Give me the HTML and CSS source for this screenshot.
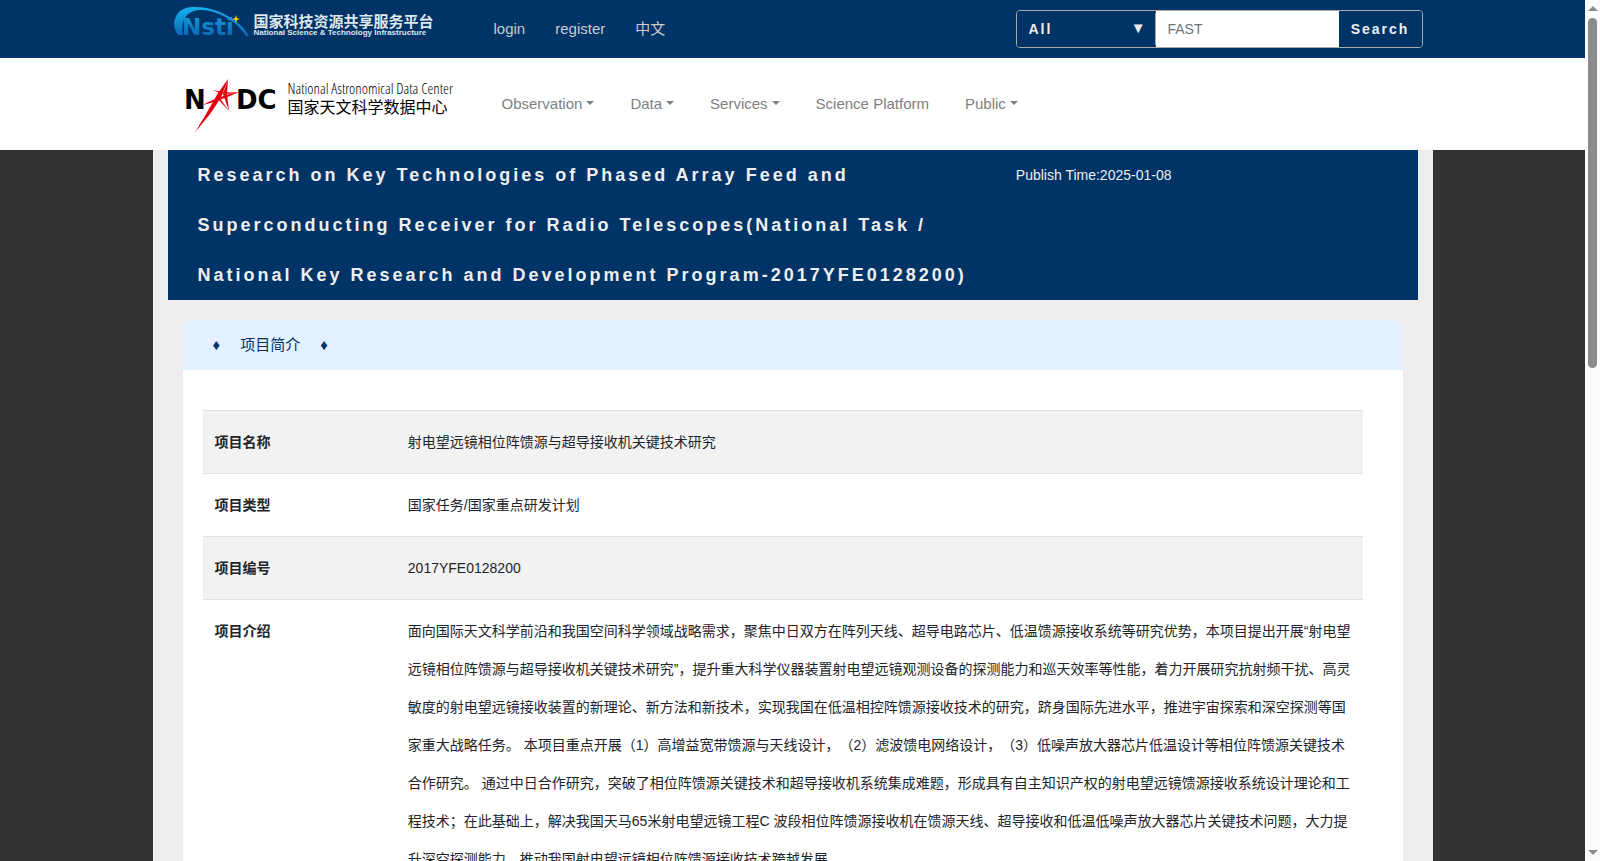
FILE: index.html
```html
<!DOCTYPE html>
<html lang="zh-CN">
<head>
<meta charset="utf-8">
<title>National Astronomical Data Center</title>
<link rel="stylesheet" href="styles.css">
</head>
<body>
<div class="viewport">
  <div class="page">
    <header class="topbar">
      <div class="container topbar-inner">
        <a class="nsti" href="#" aria-label="Nsti">
          <svg class="nsti-mark" width="78" height="32" viewBox="0 0 78 32" aria-hidden="true">
            <defs>
              <linearGradient id="sky" x1="0" y1="0" x2="0" y2="32" gradientUnits="userSpaceOnUse">
                <stop offset="0" stop-color="#16b4f0"/><stop offset="1" stop-color="#0c62ad"/>
              </linearGradient>
            </defs>
            <path fill="url(#sky)" d="M5 29C-3 18 2 1 20 1C42 0 67 13 76 30L73 30C64 15 44 4 28 4C14 4 7 14 10 29Z"/>
            <text x="9" y="29" class="nsti-word" fill="url(#sky)">Nsti</text>
            <path fill="#f6c918" d="M63 9l1 3 3 1-3 1-1 3-1-3-3-1 3-1z"/>
          </svg>
          <span class="nsti-text">
            <span class="nsti-cn">国家科技资源共享服务平台</span>
            <span class="nsti-en">National Science &amp; Technology Infrastructure</span>
          </span>
        </a>
        <nav class="account">
          <a href="#">login</a>
          <a href="#">register</a>
          <a href="#">中文</a>
        </nav>
        <form class="search">
          <div class="search-type">
            <select aria-label="Category"><option>All</option></select>
            <span class="select-arrow" aria-hidden="true">▼</span>
          </div>
          <input type="text" placeholder="FAST" aria-label="Keyword">
          <button type="button">Search</button>
        </form>
      </div>
    </header>
    <div class="mainbar">
      <div class="container mainbar-inner">
        <a class="nadc" href="#" aria-label="NADC">
          <svg width="92" height="58" viewBox="0 0 92 58" aria-hidden="true">
            <text x="-1" y="34" class="nadc-word">N</text>
            <text x="51" y="34" class="nadc-word">DC</text>
            <g fill="#e60012">
              <path d="M43 4L33 18C24 34 16 48 10 57C19 47 29 35 37 20Z"/>
              <path d="M43 4L42 19L44 36L38 19Z"/>
              <path d="M54 17C42 19 28 24 18 30C30 27 43 22 54 17Z"/>
              <path d="M54 17C45 18 36 17 28 15C34 19 45 20 54 17Z"/>
              <path d="M31 22L44 36L34 22Z"/>
            </g>
          </svg>
          <span class="nadc-text">
            <span class="nadc-en">National Astronomical Data Center</span>
            <span class="nadc-cn">国家天文科学数据中心</span>
          </span>
        </a>
        <nav class="menu">
          <a class="has-menu" href="#">Observation</a>
          <a class="has-menu" href="#">Data</a>
          <a class="has-menu" href="#">Services</a>
          <a href="#">Science Platform</a>
          <a class="has-menu" href="#">Public</a>
        </nav>
      </div>
    </div>
    <main class="container content">
      <section class="banner">
        <h1>Research on Key Technologies of Phased Array Feed and Superconducting Receiver for Radio Telescopes(National Task / National Key Research and Development Program-2017YFE0128200)</h1>
        <p>Publish Time:2025-01-08</p>
      </section>
      <section class="card">
        <h2><span>♦</span><span>项目简介</span><span>♦</span></h2>
        <table>
          <tbody>
            <tr><th scope="row">项目名称</th><td>射电望远镜相位阵馈源与超导接收机关键技术研究</td></tr>
            <tr><th scope="row">项目类型</th><td>国家任务/国家重点研发计划</td></tr>
            <tr><th scope="row">项目编号</th><td>2017YFE0128200</td></tr>
            <tr><th scope="row">项目介绍</th><td>面向国际天文科学前沿和我国空间科学领域战略需求，聚焦中日双方在阵列天线、超导电路芯片、低温馈源接收系统等研究优势，本项目提出开展“射电望远镜相位阵馈源与超导接收机关键技术研究”，提升重大科学仪器装置射电望远镜观测设备的探测能力和巡天效率等性能，着力开展研究抗射频干扰、高灵敏度的射电望远镜接收装置的新理论、新方法和新技术，实现我国在低温相控阵馈源接收技术的研究，跻身国际先进水平，推进宇宙探索和深空探测等国家重大战略任务。 本项目重点开展（1）高增益宽带馈源与天线设计，（2）滤波馈电网络设计，（3）低噪声放大器芯片低温设计等相位阵馈源关键技术合作研究。 通过中日合作研究，突破了相位阵馈源关键技术和超导接收机系统集成难题，形成具有自主知识产权的射电望远镜馈源接收系统设计理论和工程技术；在此基础上，解决我国天马65米射电望远镜工程C 波段相位阵馈源接收机在馈源天线、超导接收和低温低噪声放大器芯片关键技术问题，大力提升深空探测能力，推动我国射电望远镜相位阵馈源接收技术跨越发展。</td></tr>
          </tbody>
        </table>
      </section>
    </main>
  </div>
  <div class="scrollbar" aria-hidden="true">
    <i class="arrow-up"></i>
    <div class="track"><div class="thumb"></div></div>
    <i class="arrow-down"></i>
  </div>
</div>
</body>
</html>
```
FILE: styles.css
```css
* { box-sizing: border-box; }
body {
  margin: 0;
  background: #333;
  color: #212529;
  font: 14px/38px "Liberation Sans", "Noto Sans CJK SC", sans-serif;
  text-spacing-trim: space-all;
}
a { color: inherit; text-decoration: none; }
.viewport { display: flex; height: 100vh; }
.page { flex: 1; min-width: 0; overflow-x: hidden; overflow-y: auto; scrollbar-width: none; }
.container { max-width: 1280px; margin: 0 auto; }

.topbar { background: #036; }
.topbar-inner { display: flex; align-items: center; height: 58px; padding: 0 10px 0 20px; }
.nsti { display: flex; align-items: center; gap: 3px; margin-bottom: 15px; width: 321px; }
.nsti-mark { flex: none; overflow: visible; }
.nsti-word { font: bold 23px "DejaVu Sans", sans-serif; }
.nsti-text { display: flex; flex-direction: column; padding-top: 8px; color: #dfe6ee; font-weight: bold; white-space: nowrap; }
.nsti-cn { font-size: 15px; line-height: 15px; }
.nsti-en { font-size: 8px; line-height: 8px; }
.account { display: flex; gap: 30px; flex: 1; color: #ccc; font-size: 15px; }

.search { display: flex; width: 407px; height: 38px; border: 1px solid #aaa; border-radius: 4px; overflow: hidden; }
.search-type { position: relative; width: 139px; border-right: 1px solid #aaa; border-radius: 4px; }
.search-type select { display: block; appearance: none; width: 100%; height: 100%; padding: 0 12px; border: 0; background: #036; }
.search select, .search button { font: bold 14px "Liberation Sans", sans-serif; letter-spacing: 2px; color: #eee; }
.select-arrow { position: absolute; top: 0; right: 9px; font-size: 15px; line-height: 34px; color: #eee; pointer-events: none; }
.search input { flex: 1; min-width: 0; padding: 0 12px; border: 0; background: #fff; font: 14px "Liberation Sans", sans-serif; }
.search input::placeholder { color: #6c757d; }
.search button { width: 83px; padding: 0; border: 0; background: #036; }

.mainbar { background: #fff; }
.mainbar-inner { display: flex; align-items: center; height: 92px; padding: 0 32px; }
.nadc { display: flex; gap: 11px; width: 317px; color: #000; }
.nadc svg { flex: none; }
.nadc-word { font: bold 26px "DejaVu Sans", sans-serif; }
.nadc-text { display: flex; flex-direction: column; padding-top: 4px; white-space: nowrap; }
.nadc-en { font: 300 15px/19px "Open Sans Condensed Light", "Open Sans Condensed", "Liberation Sans", sans-serif; }
.nadc-cn { font-size: 16px; line-height: 20px; }
.menu { display: flex; gap: 36px; color: #808080; font-size: 15px; }
.has-menu::after {
  content: "";
  display: inline-block;
  margin-left: 4px;
  vertical-align: 4px;
  border: 4px solid transparent;
  border-top-color: currentColor;
  border-bottom: 0;
}

.content { min-height: 100vh; padding: 0 15px; background: #ededed; }
.banner { display: grid; grid-template-columns: 2fr 1fr; background: #036; color: #eee; }
.banner h1 { margin: 0; padding: 0 15px 0 30px; font-size: 18px; line-height: 50px; letter-spacing: 3px; }
.banner p { margin: 0; padding: 0 15px; line-height: 50px; }
.card { margin: 20px 15px 0; padding-bottom: 40px; border-radius: 10px; background: #fff; overflow: hidden; }
.card h2 { display: flex; gap: 20px; margin: 0 0 40px; padding: 0 30px; background: #e2f0ff; color: #036; font-size: 15px; font-weight: normal; line-height: 50px; }
table { width: calc(100% - 60px); margin: 0 40px 0 20px; border-collapse: collapse; table-layout: fixed; }
th, td { padding: 12px; border-top: 1px solid #dee2e6; text-align: left; vertical-align: top; }
th { width: 16.667%; }
tr:nth-child(odd) { background: #f2f2f2; }

.scrollbar { display: flex; flex-direction: column; align-items: center; width: 15px; padding: 6px 0; background: #fcfcfc; }
.track { flex: 1; width: 9px; padding: 7px 0; }
.thumb { height: 42.4%; border-radius: 5px; background: #8b8b8b; }
.arrow-up, .arrow-down { border: 5px solid transparent; }
.arrow-up { border-top: 0; border-bottom-color: #8b8b8b; }
.arrow-down { border-bottom: 0; border-top-color: #8b8b8b; }
```
